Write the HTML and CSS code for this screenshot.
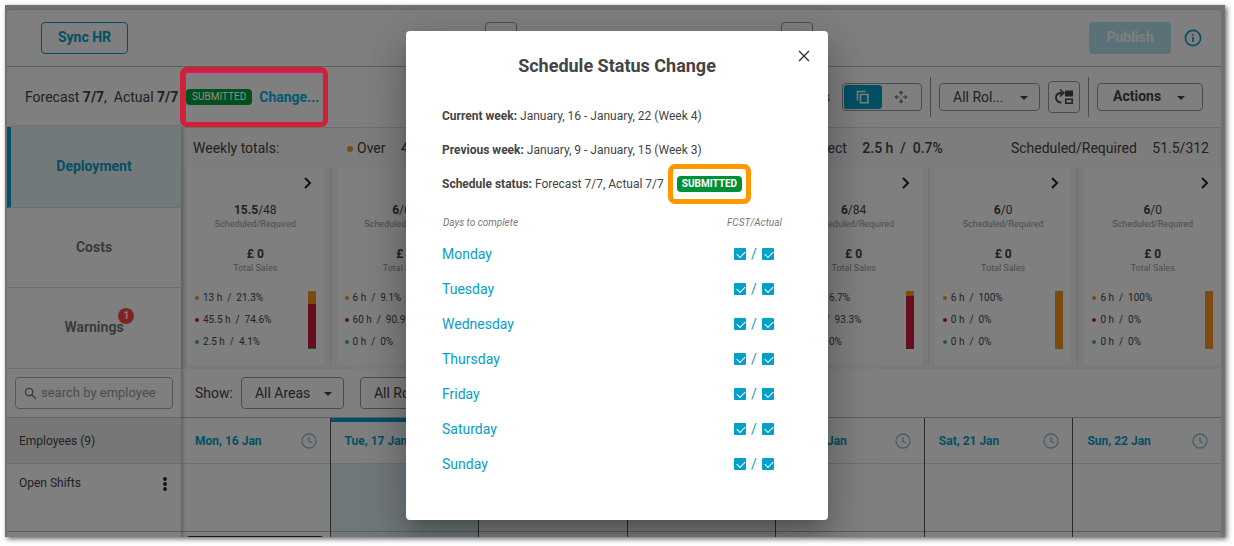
FILE: index.html
```html
<!DOCTYPE html>
<html lang="en">
<head>
<meta charset="utf-8">
<title>Schedule Status Change</title>
<link rel="stylesheet" href="styles.css">
</head>
<body>
<div class="frame">
  <div class="app">
    <header class="topbar">
      <button class="btn btn-outline">Sync HR</button>
      <div class="week-nav">
        <button class="nav-btn" aria-label="Previous week"></button>
        <button class="nav-btn" aria-label="Next week"></button>
      </div>
      <button class="btn btn-publish">Publish</button>
      <svg class="info" viewBox="0 0 18 18"><circle cx="9" cy="9" r="7.6" fill="none" stroke="currentColor" stroke-width="1.6"/><path d="M8.2 8h1.6v5H8.2zM8.2 5h1.6v1.7H8.2z" fill="currentColor"/></svg>
    </header>

    <div class="toolbar">
      <span class="status-text">Forecast <b>7/7</b>,&nbsp; Actual <b>7/7</b></span>
      <div class="callout">
        <span class="badge">SUBMITTED</span>
        <a class="change" href="#">Change...</a>
      </div>
      <div class="tools">
        <span class="tools-label">Shifts</span>
        <div class="toggle">
          <button class="toggle-btn active" aria-label="Copy"><svg viewBox="0 0 14 14"><path d="M1.5 10.5V1.5H9.5" /><path d="M4.500 4.500H12V12.700H4.500Z"/></svg></button>
          <button class="toggle-btn" aria-label="Move"><svg viewBox="0 0 16 16"><path d="M8 6V2M8 10v4M6 8H2M10 8h4M6 3.500L8 1.500l2 2M6 12.500l2 2 2-2M3.500 6L1.500 8l2 2M12.500 6l2 2-2 2"/></svg></button>
        </div>
        <span class="divider"></span>
        <span class="select select-role"><select aria-label="Role"><option>All Rol...</option></select><svg class="caret" viewBox="0 0 8 4"><path d="M0 0h8L4 4z"/></svg></span>
        <button class="icon-btn" aria-label="Change layout"><svg viewBox="0 0 20 16"><path d="M7.500 13.700C4 13.300 2 11 2 8.500 2 5.500 4 4 8 4" fill="none" stroke="currentColor" stroke-width="1.800"/><path d="M6 .5L9.800 4 6 7.500" fill="none" stroke="currentColor" stroke-width="1.600"/><path d="M11 1.500h8v6h-8z" fill="currentColor"/><path d="M11.800 10.300h6.400v3.900h-6.400z" fill="none" stroke="currentColor" stroke-width="1.600"/></svg></button>
        <span class="divider"></span>
        <button class="btn-actions">Actions<svg class="caret-inline" viewBox="0 0 8 4"><path d="M0 0h8L4 4z"/></svg></button>
      </div>
    </div>

    <div class="body">
      <aside class="sidebar">
        <nav class="tabs">
          <a class="tab tab-active" href="#">Deployment</a>
          <a class="tab" href="#">Costs</a>
          <a class="tab tab-last" href="#"><span class="tab-label">Warnings<span class="count">1</span></span></a>
        </nav>
        <div class="search-row">
          <label class="search">
            <svg viewBox="0 0 14 14"><circle cx="5.500" cy="5.500" r="4" /><path d="M8.500 8.500L13 13"/></svg>
            <input type="text" placeholder="search by employee" aria-label="Search by employee">
          </label>
        </div>
        <div class="employees">Employees (9)</div>
        <div class="open-shifts"><span>Open Shifts</span><button class="more" aria-label="More options"><svg viewBox="0 0 4 14"><circle cx="2" cy="2" r="1.900"/><circle cx="2" cy="7" r="1.900"/><circle cx="2" cy="12" r="1.900"/></svg></button></div>
      </aside>

      <main class="main">
        <div class="totals">
          <span class="totals-title">Weekly totals:</span>
          <span class="total"><i class="dot dot-lg over"></i>Over <b>49 h</b></span>
          <span class="total total-right">Correct <b>2.5 h&nbsp; /&nbsp; 0.7%</b></span>
          <span class="total total-required">Scheduled/Required <span>51.5/312</span></span>
        </div>

        <div class="cards">
          <section class="card">
            <svg class="chev" viewBox="0 0 8 12"><path d="M1 1l5 5-5 5"/></svg>
            <div class="figure"><b>15.5</b>/48</div><div class="caption">Scheduled/Required</div>
            <div class="figure sales"><b>£ 0</b></div><div class="caption">Total Sales</div>
            <div class="split"><ul class="stats"><li><i class="dot over"></i>13 h&nbsp; /&nbsp; 21.3%</li><li><i class="dot under"></i>45.5 h&nbsp; /&nbsp; 74.6%</li><li><i class="dot correct"></i>2.5 h&nbsp; /&nbsp; 4.1%</li></ul>
            <div class="bar"><i class="over" style="height:22%"></i><i class="under" style="height:76%"></i><i class="correct" style="height:2%"></i></div></div>
          </section>
          <section class="card">
            <svg class="chev" viewBox="0 0 8 12"><path d="M1 1l5 5-5 5"/></svg>
            <div class="figure"><b>6</b>/66</div><div class="caption">Scheduled/Required</div>
            <div class="figure sales"><b>£ 0</b></div><div class="caption">Total Sales</div>
            <div class="split"><ul class="stats"><li><i class="dot over"></i>6 h&nbsp; /&nbsp; 9.1%</li><li><i class="dot under"></i>60 h&nbsp; /&nbsp; 90.9%</li><li><i class="dot correct"></i>0 h&nbsp; /&nbsp; 0%</li></ul></div>
          </section>
          <section class="card"></section>
          <section class="card"></section>
          <section class="card">
            <svg class="chev" viewBox="0 0 8 12"><path d="M1 1l5 5-5 5"/></svg>
            <div class="figure"><b>6</b>/84</div><div class="caption">Scheduled/Required</div>
            <div class="figure sales"><b>£ 0</b></div><div class="caption">Total Sales</div>
            <div class="split"><ul class="stats"><li><i class="dot over"></i>6 h&nbsp; /&nbsp; 6.7%</li><li><i class="dot under"></i>84 h&nbsp; /&nbsp; 93.3%</li><li><i class="dot correct"></i>0 h&nbsp; /&nbsp; 0%</li></ul>
            <div class="bar"><i class="over" style="height:8%"></i><i class="under" style="height:92%"></i></div></div>
          </section>
          <section class="card">
            <svg class="chev" viewBox="0 0 8 12"><path d="M1 1l5 5-5 5"/></svg>
            <div class="figure"><b>6</b>/0</div><div class="caption">Scheduled/Required</div>
            <div class="figure sales"><b>£ 0</b></div><div class="caption">Total Sales</div>
            <div class="split"><ul class="stats"><li><i class="dot over"></i>6 h&nbsp; /&nbsp; 100%</li><li><i class="dot under"></i>0 h&nbsp; /&nbsp; 0%</li><li><i class="dot correct"></i>0 h&nbsp; /&nbsp; 0%</li></ul>
            <div class="bar"><i class="over" style="height:100%"></i></div></div>
          </section>
          <section class="card">
            <svg class="chev" viewBox="0 0 8 12"><path d="M1 1l5 5-5 5"/></svg>
            <div class="figure"><b>6</b>/0</div><div class="caption">Scheduled/Required</div>
            <div class="figure sales"><b>£ 0</b></div><div class="caption">Total Sales</div>
            <div class="split"><ul class="stats"><li><i class="dot over"></i>6 h&nbsp; /&nbsp; 100%</li><li><i class="dot under"></i>0 h&nbsp; /&nbsp; 0%</li><li><i class="dot correct"></i>0 h&nbsp; /&nbsp; 0%</li></ul>
            <div class="bar"><i class="over" style="height:100%"></i></div></div>
          </section>
        </div>

        <div class="filters">
          <label for="area">Show:</label>
          <span class="select select-area"><select id="area"><option>All Areas</option></select><svg class="caret" viewBox="0 0 8 4"><path d="M0 0h8L4 4z"/></svg></span>
          <span class="select select-area"><select aria-label="Filter by role"><option>All Roles</option></select></span>
        </div>

        <div class="days">
          <div class="day"><div class="day-head">Mon, 16 Jan<svg viewBox="0 0 16 16"><circle cx="8" cy="8" r="7"/><path d="M8 4v4.500l3 1.500"/></svg></div><div class="day-cell"></div><div class="day-next shift"></div></div>
          <div class="day today"><div class="day-head">Tue, 17 Jan</div><div class="day-cell"></div><div class="day-next"></div></div>
          <div class="day"><div class="day-head"></div><div class="day-cell"></div><div class="day-next"></div></div>
          <div class="day"><div class="day-head"></div><div class="day-cell"></div><div class="day-next"></div></div>
          <div class="day"><div class="day-head">Fri, 20 Jan<svg viewBox="0 0 16 16"><circle cx="8" cy="8" r="7"/><path d="M8 4v4.500l3 1.500"/></svg></div><div class="day-cell"></div><div class="day-next"></div></div>
          <div class="day"><div class="day-head">Sat, 21 Jan<svg viewBox="0 0 16 16"><circle cx="8" cy="8" r="7"/><path d="M8 4v4.500l3 1.500"/></svg></div><div class="day-cell"></div><div class="day-next"></div></div>
          <div class="day"><div class="day-head">Sun, 22 Jan<svg viewBox="0 0 16 16"><circle cx="8" cy="8" r="7"/><path d="M8 4v4.500l3 1.500"/></svg></div><div class="day-cell"></div><div class="day-next"></div></div>
        </div>
      </main>
    </div>
  </div>

  <div class="overlay">
    <div class="dialog" role="dialog" aria-labelledby="dialog-title">
      <button class="close" aria-label="Close"><svg viewBox="0 0 12 12"><path d="M1 1l10 10M11 1L1 11"/></svg></button>
      <h1 id="dialog-title">Schedule Status Change</h1>
      <p><b>Current week:</b> January, 16 - January, 22 (Week 4)</p>
      <p><b>Previous week:</b> January, 9 - January, 15 (Week 3)</p>
      <p class="status-line"><span><b>Schedule status:</b> Forecast 7/7, Actual 7/7</span><span class="status-callout"><span class="badge badge-strong">SUBMITTED</span></span></p>
      <table>
        <thead><tr><th>Days to complete</th><th class="marks">FCST/Actual</th></tr></thead>
        <tbody>
          <tr><td><a href="#">Monday</a></td><td class="marks"><input type="checkbox" checked aria-label="Monday forecast"><span>/</span><input type="checkbox" checked aria-label="Monday actual"></td></tr>
          <tr><td><a href="#">Tuesday</a></td><td class="marks"><input type="checkbox" checked aria-label="Tuesday forecast"><span>/</span><input type="checkbox" checked aria-label="Tuesday actual"></td></tr>
          <tr><td><a href="#">Wednesday</a></td><td class="marks"><input type="checkbox" checked aria-label="Wednesday forecast"><span>/</span><input type="checkbox" checked aria-label="Wednesday actual"></td></tr>
          <tr><td><a href="#">Thursday</a></td><td class="marks"><input type="checkbox" checked aria-label="Thursday forecast"><span>/</span><input type="checkbox" checked aria-label="Thursday actual"></td></tr>
          <tr><td><a href="#">Friday</a></td><td class="marks"><input type="checkbox" checked aria-label="Friday forecast"><span>/</span><input type="checkbox" checked aria-label="Friday actual"></td></tr>
          <tr><td><a href="#">Saturday</a></td><td class="marks"><input type="checkbox" checked aria-label="Saturday forecast"><span>/</span><input type="checkbox" checked aria-label="Saturday actual"></td></tr>
          <tr><td><a href="#">Sunday</a></td><td class="marks"><input type="checkbox" checked aria-label="Sunday forecast"><span>/</span><input type="checkbox" checked aria-label="Sunday actual"></td></tr>
        </tbody>
      </table>
    </div>
  </div>
</div>
</body>
</html>
```

FILE: styles.css
```css
* { box-sizing: border-box; }
body { margin: 0; padding: 5px 9px 9px 5px; background: #fff; font-family: Roboto, sans-serif; font-size: 14px; line-height: 16px; color: #444; }
button, input, select { font: inherit; color: inherit; margin: 0; }
button { background: none; padding: 0; border: 0; }
a { color: #04a0c8; text-decoration: none; }
b { font-weight: 700; }
svg { display: block; }

.frame { position: relative; height: calc(100vh - 14px); overflow: hidden; padding: 4px 4px 0 2px; background: #e2e2e2; }
body::before { content: ""; position: absolute; inset: 5px 9px 9px 5px; box-shadow: 2px 2px 5px rgba(0, 0, 0, .6); }
.app { height: 100%; overflow: hidden; background: #fff; border-top: 1px solid #d4d4d4; border-radius: 4px 4px 0 0; }

.topbar { display: flex; align-items: center; height: 57px; padding: 0 19px 0 34px; border-bottom: 1px solid #bbb; }
.btn { height: 32px; border-radius: 4px; font-weight: 700; padding-bottom: 2px; }
.btn-outline { width: 87px; border: 1px solid #04a0c8; color: #04a0c8; }
.week-nav { flex: 1; display: flex; justify-content: center; gap: 264px; margin-right: 52px; padding-left: 132px; }
.nav-btn { width: 32px; height: 32px; border: 1px solid #999; border-radius: 4px; }
.btn-publish { width: 82px; background: #b4e2ee; color: #fff; }
.info { width: 18px; height: 18px; margin-left: 13px; color: #04a0c8; }

.toolbar { display: flex; align-items: center; height: 60px; padding: 0 18px; }
.status-text { width: 155px; white-space: nowrap; }
.callout { position: relative; z-index: 3; display: flex; align-items: center; align-self: stretch; width: 148px; gap: 7px; padding: 0 0 0 6px; }
.callout::after { content: ""; position: absolute; inset: 0; border: 5px solid #cf2138; border-radius: 7px; box-shadow: inset 1px 1px #f08; }
.callout .badge { background: #00501e; color: #909090; }
.callout .change { color: #025a70; font-weight: 700; }
.badge { display: inline-block; padding: 0 6px; border-radius: 4px; background: #018f37; color: #fff; font-size: 10px; line-height: 16px; }
.badge-strong { font-weight: 700; padding: 0 5px; }
.tools { flex: 1; display: flex; align-items: center; justify-content: flex-end; gap: 8px; }
.tools-label { margin-right: 4px; }
.toggle { display: flex; width: 80px; height: 28px; padding: 1px; border: 1px solid #999; border-radius: 4px; }
.toggle-btn { flex: 1; display: grid; place-items: center; border-radius: 3px; }
.toggle-btn svg { width: 14px; height: 14px; fill: none; stroke: #666; stroke-width: 1.2; }
.toggle-btn.active { background: #04a0c8; }
.toggle-btn.active svg { stroke: #fff; stroke-width: 1.6; }
.divider { width: 1px; height: 40px; background: #999; }
.select { position: relative; display: block; }
.select select { appearance: none; width: 100%; height: 100%; padding: 0 13px; border: 1px solid #999; border-radius: 4px; background: #fff; }
.select-role { width: 101px; height: 28px; }
.select-area { width: 103px; height: 32px; }
.caret { position: absolute; right: 12px; top: 50%; width: 8px; height: 4px; margin-top: -1px; }
.caret, .caret-inline { fill: #444; }
.icon-btn { display: grid; place-items: center; width: 32px; height: 32px; border: 1px solid #999; border-radius: 4px; }
.icon-btn svg { width: 20px; height: 16px; }
.btn-actions { display: flex; align-items: center; justify-content: space-between; width: 106px; height: 28px; padding: 0 17px 2px 15px; border: 1px solid #999; border-radius: 4px; font-weight: 700; }
.caret-inline { width: 8px; height: 4px; margin-top: 3px; }

.body { display: grid; grid-template-columns: 174px minmax(0, 1fr); }
.sidebar { position: relative; z-index: 1; box-shadow: 2px 0 4px rgba(0, 0, 0, .25); background: #fff; }
.tab { display: grid; place-items: center; height: 80px; padding-bottom: 2px; border-bottom: 1px solid #ddd; color: #777; font-weight: 700; }
.tab-active { height: 81px; background: #e4f3f6; color: #04a0c8; border-left: 4px solid #04a0c8; padding-right: 4px; }
.tab-last { height: 81px; }
.tab-label { position: relative; }
.count { position: absolute; left: 54px; top: -11px; width: 16px; height: 16px; border-radius: 8px; background: #ff4646; color: #fff; font-size: 10px; line-height: 16px; text-align: center; }
.search-row { height: 49px; padding: 8px; border-bottom: 1px solid #ccc; }
.search { display: flex; align-items: center; gap: 4px; height: 32px; padding: 0 8px; border: 1px solid #aaa; border-radius: 4px; }
.search svg { flex: none; width: 13px; height: 13px; fill: none; stroke: #777; stroke-width: 1.5; }
.search input { min-width: 0; flex: 1; border: 0; padding: 0; outline: 0; background: none; font-size: 13px; }
.search input::placeholder { color: #999; opacity: 1; }
.employees { height: 46px; padding: 0 12px; line-height: 46px; font-size: 12px; background: #efefef; border-bottom: 1px solid #ddd; }
.open-shifts { display: flex; justify-content: space-between; height: 68px; padding: 11px 14px 0 12px; font-size: 12px; border-bottom: 1px solid #bbb; }
.more { align-self: flex-start; margin-top: 2px; }
.more svg { width: 4px; height: 14px; fill: #222; }

.totals { display: flex; align-items: center; height: 41px; padding: 0 12px; border-top: 1px solid #ddd; background: #fafafa; white-space: nowrap; }
.totals-title { width: 154px; }
.total-right { margin-left: auto; }
.total b { margin-left: 12px; font-weight: 500; }
.total-required { margin-left: 68px; }
.total-required span { margin-left: 12px; }
.dot { display: inline-block; width: 4px; height: 4px; border-radius: 50%; margin-right: 4px; vertical-align: middle; }
.dot-lg { width: 6px; height: 6px; }
.over { background: #f7981d; }
.under { background: #cc1d38; }
.correct { background: #3cb878; }

.cards { display: grid; grid-template-columns: repeat(7, minmax(0, 1fr)); gap: 13px; height: 201px; padding: 0 0 4px 6px; background: #f4f4f4; }
.card { position: relative; background: #fff; padding: 9px 8px 0; text-align: center; }
.card + .card::before { content: ""; position: absolute; left: -7px; top: 0; bottom: 0; width: 1px; background: #e0e0e0; }
.chev { width: 8px; height: 12px; margin: 0 4px 0 auto; fill: none; stroke: #222; stroke-width: 2; }
.figure { margin-top: 13px; font-size: 12px; line-height: 16px; }
.sales { margin-top: 16px; }
.caption { font-size: 9px; line-height: 12px; color: #999; }
.split { display: flex; justify-content: space-between; height: 68px; margin-top: 12px; }
.stats { list-style: none; margin: 1px 0 0; padding: 0; font-size: 10px; line-height: 22px; text-align: left; white-space: nowrap; }
.bar { display: flex; flex-direction: column; width: 8px; height: 58px; margin-top: 5px; }

.filters { display: flex; align-items: center; gap: 16px; height: 49px; padding: 0 14px; border-bottom: 1px solid #bbb; }
.filters label { margin-right: -8px; }
.days { display: grid; grid-template-columns: repeat(7, minmax(0, 1fr)); }
.day + .day { border-left: 1px solid #555; }
.day-head { display: flex; align-items: center; justify-content: space-between; height: 46px; padding: 0 13px 0 14px; font-size: 12px; font-weight: 700; color: #04a0c8; border-bottom: 1px solid #ddd; }
.day-head svg { width: 16px; height: 16px; fill: none; stroke: #8fbccb; stroke-width: 1.3; }
.day-cell { height: 68px; border-bottom: 1px solid #bbb; }
.day-next { height: 6px; }
.shift { margin: 4px 6px 0 5px; border-top: 1px solid #333; border-radius: 4px 4px 0 0; }
.today .day-head { border-top: 4px solid #04a0c8; padding-bottom: 4px; }
.today .day-cell, .today .day-next { background: #e2f1f8; }

.overlay { position: absolute; inset: 0; z-index: 2; display: flex; justify-content: center; align-items: flex-start; padding: 26px 0 0 4px; background: rgba(0, 0, 0, .5); }
.dialog { position: relative; width: 422px; padding: 25px 36px 39px; border-radius: 4px; background: #fff; box-shadow: 0 11px 15px -7px rgba(0, 0, 0, .2), 0 24px 38px 3px rgba(0, 0, 0, .14), 0 9px 46px 8px rgba(0, 0, 0, .12); font-size: 12px; }
.close { position: absolute; right: 18px; top: 19px; }
.close svg { width: 12px; height: 12px; fill: none; stroke: #333; stroke-width: 1.4; }
h1 { margin: 0 0 32px; font-size: 18px; line-height: 20px; font-weight: 700; text-align: center; }
p { margin: 0 0 18px; }
.status-line { display: flex; align-items: center; height: 16px; gap: 4px; }
.status-callout { display: flex; padding: 7px 4px; border: 5px solid #ff9800; border-radius: 7px; }
table { width: 100%; border-collapse: collapse; font-size: 14px; }
th { height: 26px; padding: 0 1px; font-size: 10px; font-style: italic; font-weight: 400; text-align: left; color: #777; }
td { height: 35px; padding: 0; color: #04a0c8; }
th.marks, td.marks { width: 66px; white-space: nowrap; }
td.marks { padding-left: 8px; }
td.marks span { display: inline-block; width: 16px; text-align: center; vertical-align: middle; }
td input { position: relative; appearance: none; width: 12px; height: 12px; border-radius: 1px; background: #04a0c8; vertical-align: middle; }
td input:checked::after { content: ""; position: absolute; left: 3px; top: 3px; width: 7px; height: 4px; border: solid #fff; border-width: 0 0 1px 1px; transform: rotate(-45deg); }
```
